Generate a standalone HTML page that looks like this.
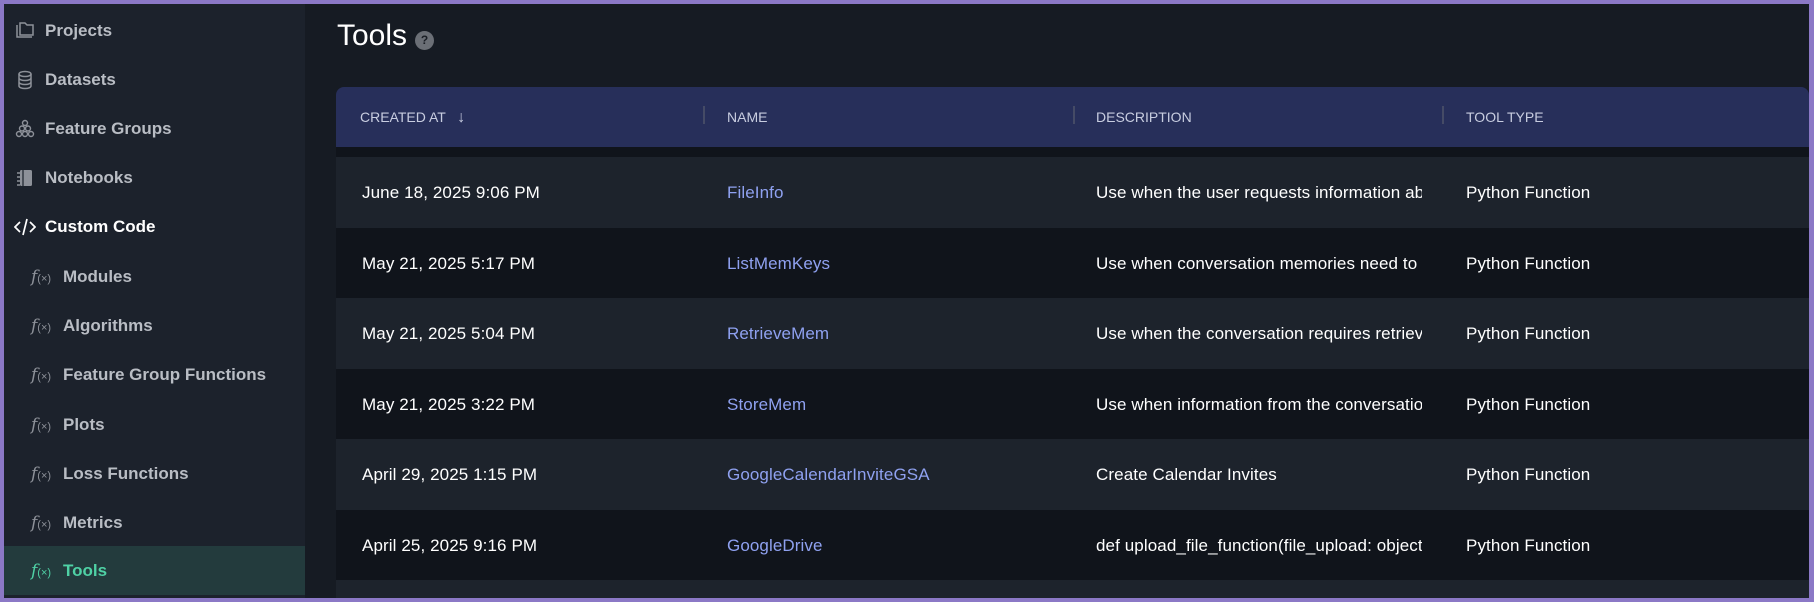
<!DOCTYPE html>
<html><head><meta charset="utf-8"><style>
*{box-sizing:border-box;margin:0;padding:0}
html,body{width:1814px;height:602px;overflow:hidden;background:#8b78c6}
.frame{position:absolute;left:4px;top:4px;width:1805px;height:594px;background:#161b23;overflow:hidden;font-family:"Liberation Sans",sans-serif}
.side{position:absolute;left:0;top:0;width:301px;height:594px;background:#1c222c}
.item{position:absolute;left:0;width:301px;height:49px;display:flex;align-items:center;font-size:17px;font-weight:bold;color:#b9bdc4}
.item .ic{position:absolute;left:10px;top:50%;transform:translateY(-50%);width:22px;height:22px}
.item .t{position:absolute;left:41px}
.sub .t{left:59px}
.sub .fx{position:absolute;left:27px;font-family:"DejaVu Serif",serif;font-style:italic;font-weight:normal;font-size:17px;color:#8d9199}
.sub .fx small{font-style:normal;font-family:"Liberation Sans",sans-serif;font-size:11px}
.act{background:#233b3d;color:#4fd1a5}
.act .fx{color:#4fd1a5}
.title{position:absolute;left:333px;top:15px;font-size:30px;color:#fff}
.help{position:absolute;left:411px;top:27px;width:19px;height:19px;border-radius:50%;background:#6b6f76;color:#1a1e25;font-size:12px;font-weight:bold;text-align:center;line-height:19px}
.table{position:absolute;left:332px;top:83px;width:1473px}
.hd{height:60px;background:#272f5a;border-radius:8px 8px 0 0;position:relative;color:#c8cde0;font-size:14px}
.hd span{position:absolute;top:22px}
.sep{position:absolute;top:19px;width:2px;height:18px;background:#454b66}
.gap{height:10px;background:#10141b}
.row{height:70.5px;position:relative;color:#fff;font-size:17px;letter-spacing:0.1px}
.row span{position:absolute;top:26px;white-space:nowrap}
.row .n{color:#8fa1f0}
.row .d{width:326px;overflow:hidden}
.r0{background:#1d232c}.r1{background:#10141b}
</style></head><body><div class="frame">
<div class="side">
<div class="item" style="top:2px"><svg class="ic" viewBox="0 0 22 22" fill="none" stroke="#8d9199" stroke-width="1.5"><path d="M3 5v12h15"/><path d="M6 3h5l2 2h6v10H6z"/></svg><span class="t">Projects</span></div>
<div class="item" style="top:51px"><svg class="ic" viewBox="0 0 22 22" fill="none" stroke="#8d9199" stroke-width="1.5"><ellipse cx="11" cy="5" rx="6" ry="2.5"/><path d="M5 5v12c0 1.4 2.7 2.5 6 2.5s6-1.1 6-2.5V5M5 9c0 1.4 2.7 2.5 6 2.5s6-1.1 6-2.5M5 13c0 1.4 2.7 2.5 6 2.5s6-1.1 6-2.5"/></svg><span class="t">Datasets</span></div>
<div class="item" style="top:100px"><svg class="ic" viewBox="0 0 22 22" fill="none" stroke="#8d9199" stroke-width="1.4"><circle cx="11" cy="5" r="2.5"/><circle cx="8" cy="10.5" r="2.5"/><circle cx="14" cy="10.5" r="2.5"/><circle cx="5" cy="16" r="2.5"/><circle cx="11" cy="16" r="2.5"/><circle cx="17" cy="16" r="2.5"/></svg><span class="t">Feature Groups</span></div>
<div class="item" style="top:149px"><svg class="ic" viewBox="0 0 22 22"><rect x="6" y="3" width="12" height="16" rx="1.5" fill="#8d9199"/><path d="M3 6h3M3 10h3M3 14h3M3 18h3" stroke="#8d9199" stroke-width="1.5"/><path d="M9 3v16" stroke="#1c222c" stroke-width="1.2"/></svg><span class="t">Notebooks</span></div>
<div class="item" style="top:198px;color:#fff"><svg class="ic" viewBox="0 0 22 22" fill="none" stroke="#fff" stroke-width="1.7"><path d="M6 6l-5 5 5 5M16 6l5 5-5 5M13 3l-4 16"/></svg><span class="t">Custom Code</span></div>
<div class="item sub" style="top:248px"><span class="fx">f<small>(×)</small></span><span class="t">Modules</span></div>
<div class="item sub" style="top:297px"><span class="fx">f<small>(×)</small></span><span class="t">Algorithms</span></div>
<div class="item sub" style="top:346px"><span class="fx">f<small>(×)</small></span><span class="t">Feature Group Functions</span></div>
<div class="item sub" style="top:396px"><span class="fx">f<small>(×)</small></span><span class="t">Plots</span></div>
<div class="item sub" style="top:445px"><span class="fx">f<small>(×)</small></span><span class="t">Loss Functions</span></div>
<div class="item sub" style="top:494px"><span class="fx">f<small>(×)</small></span><span class="t">Metrics</span></div>
<div class="item sub act" style="top:542px"><span class="fx">f<small>(×)</small></span><span class="t">Tools</span></div>
</div>
<div class="title">Tools</div><div class="help">?</div>
<div class="table">
<div class="hd"><span style="left:24px">CREATED AT &nbsp;&nbsp;<b style="font-size:16px;font-weight:normal">↓</b></span>
<div class="sep" style="left:367px"></div><span style="left:391px">NAME</span>
<div class="sep" style="left:737px"></div><span style="left:760px">DESCRIPTION</span>
<div class="sep" style="left:1106px"></div><span style="left:1130px">TOOL TYPE</span></div>
<div class="gap"></div>
<div class="row r0"><span style="left:26px">June 18, 2025 9:06 PM</span><span class="n" style="left:391px">FileInfo</span><span class="d" style="left:760px">Use when the user requests information about a file</span><span style="left:1130px">Python Function</span></div>
<div class="row r1"><span style="left:26px">May 21, 2025 5:17 PM</span><span class="n" style="left:391px">ListMemKeys</span><span class="d" style="left:760px">Use when conversation memories need to be listed</span><span style="left:1130px">Python Function</span></div>
<div class="row r0"><span style="left:26px">May 21, 2025 5:04 PM</span><span class="n" style="left:391px">RetrieveMem</span><span class="d" style="left:760px">Use when the conversation requires retrieving memory</span><span style="left:1130px">Python Function</span></div>
<div class="row r1"><span style="left:26px">May 21, 2025 3:22 PM</span><span class="n" style="left:391px">StoreMem</span><span class="d" style="left:760px">Use when information from the conversation should be stored</span><span style="left:1130px">Python Function</span></div>
<div class="row r0"><span style="left:26px">April 29, 2025 1:15 PM</span><span class="n" style="left:391px">GoogleCalendarInviteGSA</span><span class="d" style="left:760px">Create Calendar Invites</span><span style="left:1130px">Python Function</span></div>
<div class="row r1"><span style="left:26px">April 25, 2025 9:16 PM</span><span class="n" style="left:391px">GoogleDrive</span><span class="d" style="left:760px">def upload_file_function(file_upload: object)</span><span style="left:1130px">Python Function</span></div>
<div class="row r0"></div>
</div>
</div></body></html>
